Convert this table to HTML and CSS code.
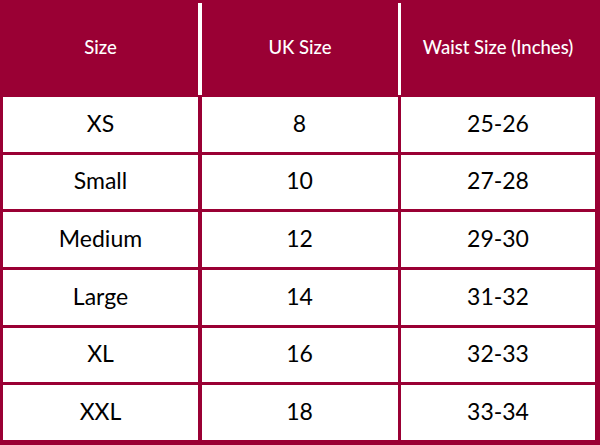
FILE: index.html
```html
<!DOCTYPE html>
<html>
<head>
<meta charset="utf-8">
<link rel="stylesheet" href="styles.css">
</head>
<body>
<div class="chart">
  <div class="head">
    <div class="hcell">Size</div>
    <div class="hsep"></div>
    <div class="hcell">UK Size</div>
    <div class="hsep"></div>
    <div class="hcell">Waist Size (Inches)</div>
  </div>
  <div class="rows">
    <div class="cell">XS</div><div class="cell">8</div><div class="cell">25-26</div>
    <div class="cell">Small</div><div class="cell">10</div><div class="cell">27-28</div>
    <div class="cell">Medium</div><div class="cell">12</div><div class="cell">29-30</div>
    <div class="cell">Large</div><div class="cell">14</div><div class="cell">31-32</div>
    <div class="cell">XL</div><div class="cell">16</div><div class="cell">32-33</div>
    <div class="cell">XXL</div><div class="cell">18</div><div class="cell">33-34</div>
  </div>
</div>
</body>
</html>
```
FILE: styles.css
```css
html, body {
  margin: 0;
  padding: 0;
}
.chart {
  width: 600px;
  height: 445px;
  background: #9a0034;
  box-sizing: border-box;
  padding: 0 5px 5px 3px;
  display: flex;
  flex-direction: column;
  font-family: "Lato", "Open Sans", sans-serif;
}
.head {
  height: 95px;
  display: grid;
  grid-template-columns: 195px 4px 196px 3px 194px;
  padding-top: 3px;
  box-sizing: border-box;
}
.hcell {
  color: #fff;
  font-size: 18.5px;
  font-weight: 500;
  display: flex;
  align-items: center;
  justify-content: center;
  padding-bottom: 4px;
}
.hsep {
  background: #fff;
}
.rows {
  margin-top: 2px;
  flex: 1;
  display: grid;
  grid-template-columns: 195px 196px 194px;
  grid-template-rows: repeat(6, 1fr);
  column-gap: 3.5px;
  row-gap: 3px;
}
.cell {
  background: #fff;
  color: #000;
  font-size: 23px;
  display: flex;
  align-items: center;
  justify-content: center;
  padding-bottom: 3px;
  box-sizing: border-box;
}
```
